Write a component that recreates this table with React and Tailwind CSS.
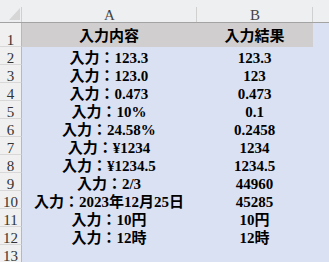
import React from "react";

const rows = [
  ["入力：123.3", "123.3"],
  ["入力：123.0", "123"],
  ["入力：0.473", "0.473"],
  ["入力：10%", "0.1"],
  ["入力：24.58%", "0.2458"],
  ["入力：¥1234", "1234"],
  ["入力：¥1234.5", "1234.5"],
  ["入力：2/3", "44960"],
  ["入力：2023年12月25日", "45285"],
  ["入力：10円", "10円"],
  ["入力：12時", "12時"],
  ["", ""],
];

const cellFont = {
  fontFamily: '"Liberation Serif", "Noto Sans CJK JP", serif',
};

export default function App() {
  return (
    <div className="w-[329px] h-[262px] overflow-hidden bg-[#dae1f2]" style={cellFont}>
      {/* column header */}
      <div className="flex h-[23px] bg-[#eeeff1] border-b border-[#a3a3a3]">
        <div className="w-[22px] shrink-0 relative">
          <svg className="absolute left-[9px] top-[8px]" width="11" height="12" viewBox="0 0 11 12">
            <polygon points="11,0 11,12 0,12" fill="#d6d6d6" />
          </svg>
          <div className="absolute right-0 bottom-0 w-px h-[15px] bg-[#d0d0d0]" />
        </div>
        <div className="w-[175px] shrink-0 relative flex items-end justify-center text-[15px] leading-[14px] text-[#444]">
          A
          <div className="absolute right-0 bottom-0 w-px h-[15px] bg-[#d0d0d0]" />
        </div>
        <div className="w-[116px] shrink-0 relative flex items-end justify-center text-[15px] leading-[14px] text-[#444]">
          B
          <div className="absolute right-0 bottom-0 w-px h-[15px] bg-[#d0d0d0]" />
        </div>
        <div className="flex-1" />
      </div>
      {/* row 1 */}
      <div className="flex h-[24px]">
        <div className="w-[22px] shrink-0 bg-[#f0f0f0] border-r border-[#b8b8b8] border-b border-b-[#d8d8d8] flex items-end justify-center text-[15px] leading-[12px] text-[#333]">
          1
        </div>
        <div className="w-[291px] shrink-0 flex bg-[#d0cece]">
          <div className="w-[174px] shrink-0 flex items-end justify-center font-bold text-[15px] leading-[21px] text-black">
            入力内容
          </div>
          <div className="w-[117px] shrink-0 flex items-end justify-center font-bold text-[15px] leading-[21px] text-black">
            入力結果
          </div>
        </div>
        <div className="flex-1" />
      </div>
      {rows.map(([a, b], i) => (
        <div key={i} className="flex h-[18px]">
          <div className="w-[22px] shrink-0 bg-[#f0f0f0] border-r border-[#b8b8b8] border-b border-b-[#d8d8d8] flex items-end justify-center text-[15px] leading-[12px] text-[#333]">
            {i + 2}
          </div>
          <div className="w-[174px] shrink-0 flex items-end justify-center font-bold text-[15px] leading-[13px] text-black whitespace-nowrap">
            {a}
          </div>
          <div className="w-[117px] shrink-0 flex items-end justify-center font-bold text-[15px] leading-[13px] text-black whitespace-nowrap">
            {b}
          </div>
          <div className="flex-1" />
        </div>
      ))}
    </div>
  );
}
